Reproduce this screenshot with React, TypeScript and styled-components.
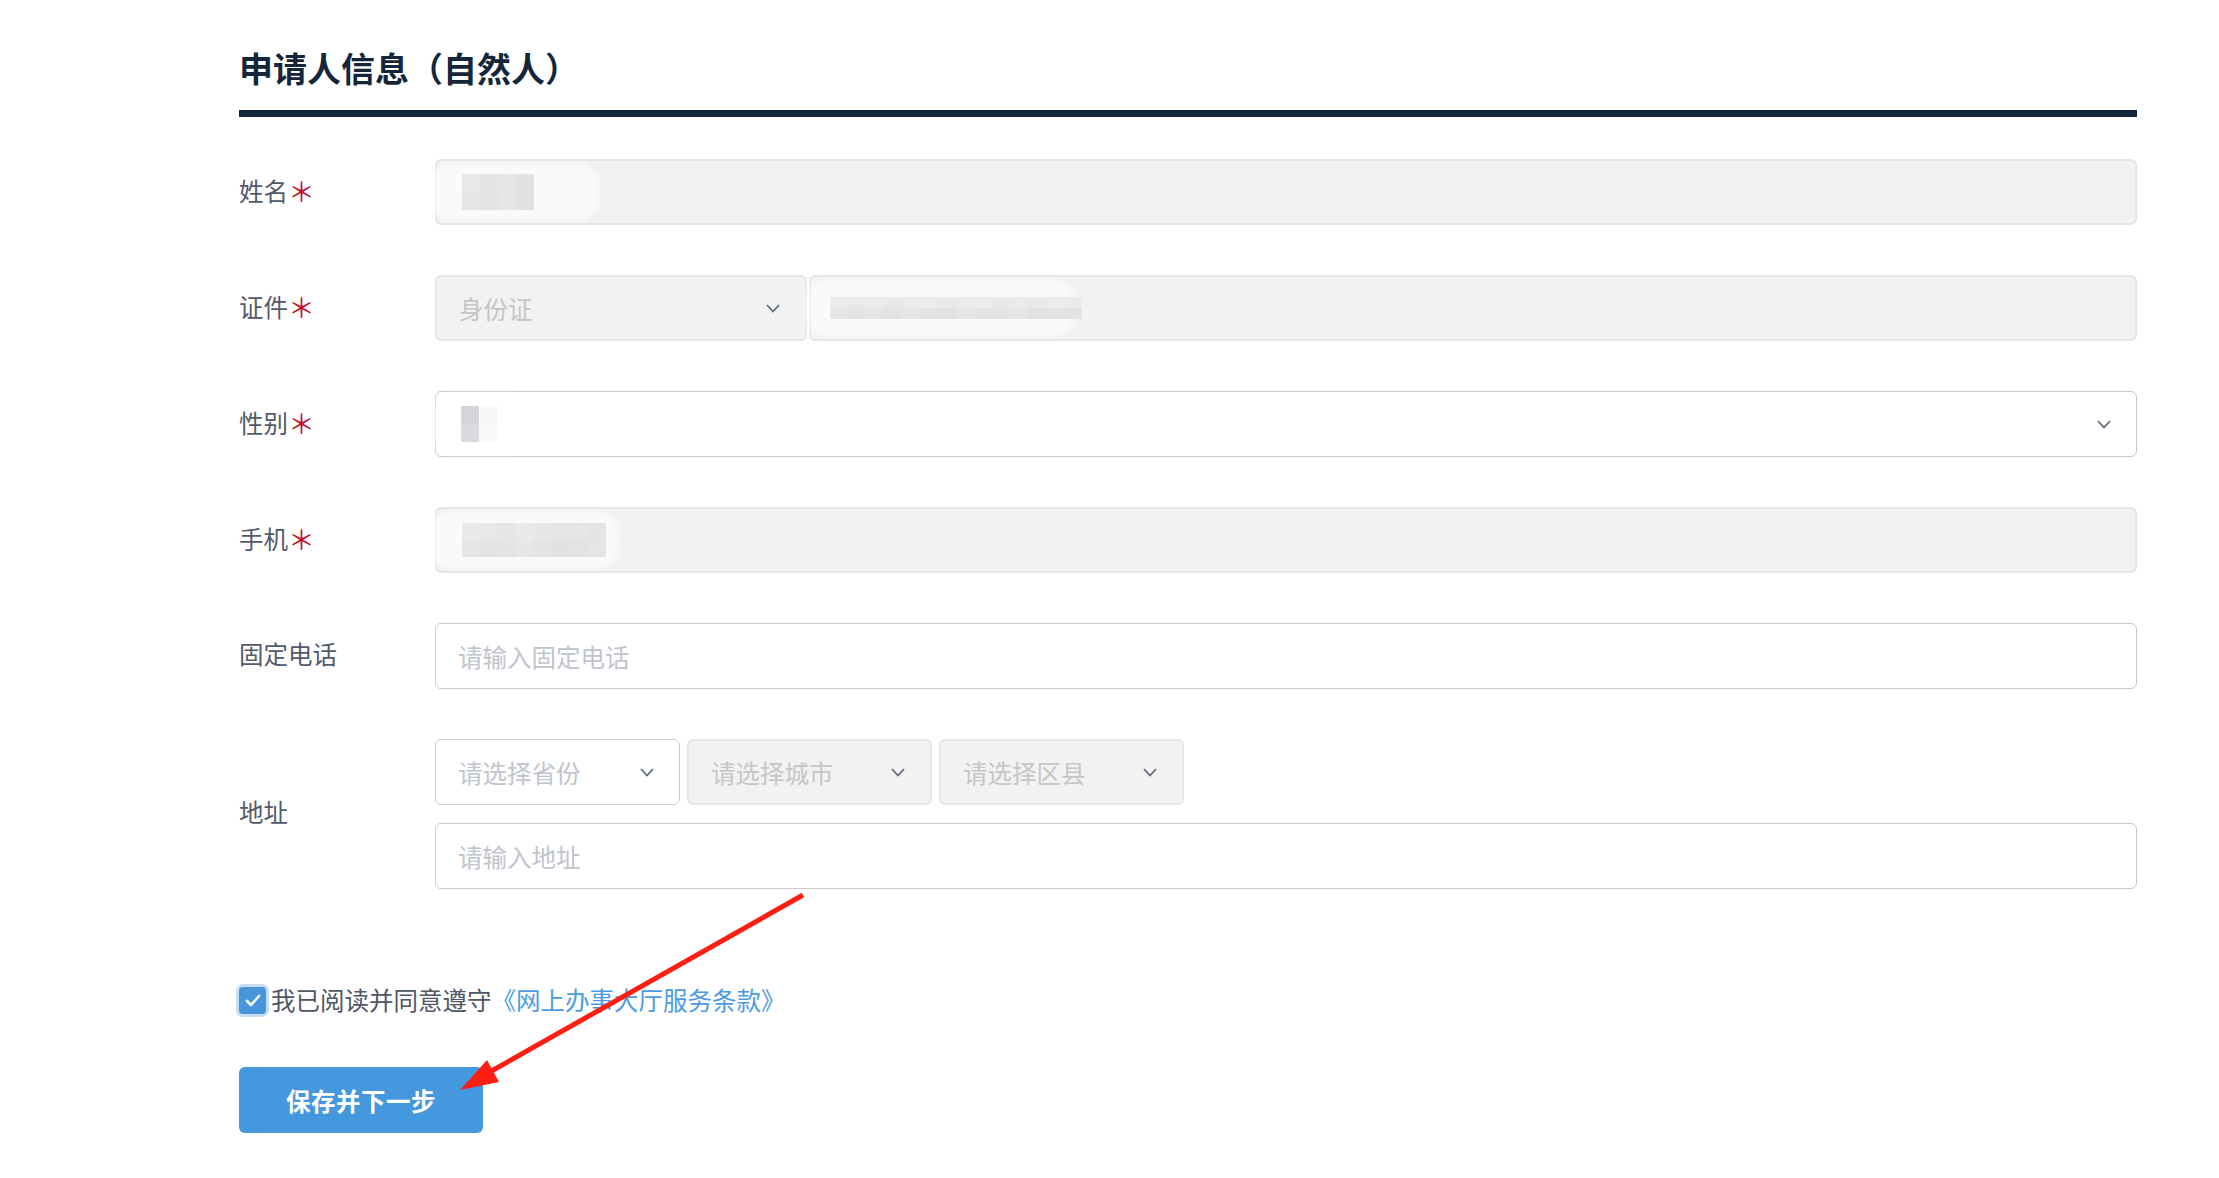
import React, { FC } from "react";
import styled, { createGlobalStyle } from "styled-components";

const GlobalStyle = createGlobalStyle`
    html, body {
        margin: 0;
        padding: 0;
        background: #fff;
    }
    body {
        font-family: "Noto Sans CJK SC", "Noto Sans", sans-serif;
    }
    * {
        box-sizing: border-box;
    }
`;

const Page = styled.div`
    position: relative;
    width: 2219px;
    height: 1178px;
    padding: 48px 0 0 239px;
    overflow: hidden;
`;

const Section = styled.section`
    width: 1898px;
`;

const Title = styled.h2`
    margin: 0;
    font-size: 34px;
    line-height: 40px;
    font-weight: 700;
    color: #15263a;
`;

const TitleRule = styled.div`
    height: 7px;
    margin-top: 22px;
    background: #14263a;
`;

const Form = styled.div`
    display: flex;
    flex-direction: column;
    gap: 50px;
    margin-top: 42px;
`;

const Row = styled.div`
    display: flex;
    align-items: center;
`;

const Label = styled.div`
    width: 196px;
    flex: none;
    font-size: 24.5px;
    line-height: 34px;
    color: #525a6a;
    transform: translateY(-2px);
`;

const Required = styled.span`
    display: inline-block;
    font-size: 27px;
    line-height: 34px;
    font-weight: 400;
    color: #c40f30;
    transform: translateY(1px);
`;

const Fields = styled.div`
    flex: 1;
    display: flex;
    flex-direction: column;
    gap: 18px;
`;

const FieldLine = styled.div<{ $gap: number }>`
    display: flex;
    gap: ${p => p.$gap}px;
`;

const Box = styled.div<{ $disabled?: boolean; $width?: number }>`
    position: relative;
    height: 66px;
    ${p => (p.$width ? `width: ${p.$width}px; flex: none;` : `flex: 1;`)}
    display: flex;
    align-items: center;
    padding: 0 25px 0 22px;
    border-radius: 6px;
    border: ${p => (p.$disabled ? "2px solid #e6e6e6" : "1.5px solid #cacaca")};
    background: ${p => (p.$disabled ? "#f2f2f2" : "#fff")};
    font-size: 24.5px;
    color: #c0c4cc;
`;

const Placeholder = styled.span<{ $disabled?: boolean }>`
    flex: 1;
    color: ${p => (p.$disabled ? "#c6c6c6" : "#c0c4cc")};
    white-space: nowrap;
`;

const Chevron = styled.svg`
    flex: none;
    width: 14px;
    height: 9px;
`;

const Halo = styled.div<{ $left: number; $width: number }>`
    position: absolute;
    top: 2px;
    bottom: 2px;
    left: ${p => p.$left}px;
    width: ${p => p.$width}px;
    border-radius: 22px;
    background: rgba(255, 255, 255, 0.6);
    filter: blur(2px);
`;

const MosaicGrid = styled.div<{ $cols: number; $cw: number; $ch: number; $offset: number }>`
    position: relative;
    display: grid;
    grid-template-columns: repeat(${p => p.$cols}, ${p => p.$cw}px);
    grid-auto-rows: ${p => p.$ch}px;
    margin-left: ${p => p.$offset}px;
`;

const Cell = styled.div<{ $shade: string }>`
    background: ${p => p.$shade};
`;

const Agreement = styled.label`
    display: flex;
    align-items: center;
    margin-top: 95px;
    font-size: 24.5px;
    line-height: 32px;
    color: #4f5666;
`;

const CheckBox = styled.span`
    display: inline-flex;
    align-items: center;
    justify-content: center;
    width: 27px;
    height: 27px;
    margin: 0 5px 0 0;
    border-radius: 4px;
    background: #4796dc;
    box-shadow: 0 0 0 3px #c7ddf4;
`;

const TermsLink = styled.a`
    color: #4b9be3;
    text-decoration: none;
`;

const PrimaryButton = styled.button`
    display: block;
    width: 244px;
    height: 66px;
    margin-top: 51px;
    border: none;
    border-radius: 6px;
    background: #4398de;
    color: #fff;
    font-family: inherit;
    font-size: 24.5px;
    font-weight: 700;
    letter-spacing: 0.5px;
`;

const ArrowLayer = styled.svg`
    position: absolute;
    left: 0;
    top: 0;
    width: 2219px;
    height: 1178px;
    pointer-events: none;
`;

const ChevronIcon: FC = () => (
    <Chevron viewBox="0 0 14 9">
        <polyline points="1,1 7,7.5 13,1" fill="none" stroke="#5f6b7c" strokeWidth="1.8" />
    </Chevron>
);

interface IMosaic {
    cols: number;
    cw: number;
    ch: number;
    offset?: number;
    shades: string[];
}

const Mosaic: FC<IMosaic> = ({ cols, cw, ch, offset = 5, shades }) => (
    <MosaicGrid $cols={cols} $cw={cw} $ch={ch} $offset={offset}>
        {shades.map((s, i) => (
            <Cell key={i} $shade={s} />
        ))}
    </MosaicGrid>
);

const nameShades = ["#e8e8e8", "#e4e4e4", "#e6e6e6", "#e2e2e2", "#e5e5e5", "#e3e3e3", "#e6e6e6", "#e1e1e1"];
const genderShades = ["#d4d5da", "#f6f7f9", "#dadbe0", "#f8f9fa"];
const phoneShades = [
    "#e9e9e9", "#e8e8e8", "#e6e6e6", "#e9e9e9", "#e7e7e7", "#e5e5e5", "#e6e6e6", "#e4e4e4",
    "#e6e6e6", "#e3e3e3", "#e4e4e4", "#e7e7e7", "#e4e4e4", "#e2e2e2", "#e3e3e3", "#e5e5e5",
];
const idShades = [
    "#ececec", "#eaeaea", "#ebebeb", "#e9e9e9", "#eaeaea", "#ebebeb", "#e9e9e9", "#eaeaea", "#ebebeb", "#e9e9e9", "#eaeaea", "#e9e9e9", "#ebebeb", "#eaeaea",
    "#e6e6e6", "#e4e4e4", "#e5e5e5", "#e3e3e3", "#e6e6e6", "#e4e4e4", "#e2e2e2", "#e5e5e5", "#e4e4e4", "#e3e3e3", "#e5e5e5", "#e2e2e2", "#e4e4e4", "#e3e3e3",
];

const Star: FC = () => <Required>＊</Required>;

export default function App() {
    return (
        <Page>
            <GlobalStyle />
            <Section>
                <Title>申请人信息（自然人）</Title>
                <TitleRule />
                <Form>
                    <Row>
                        <Label>姓名<Star /></Label>
                        <Box $disabled>
                            <Halo $left={-8} $width={170} />
                            <Mosaic cols={4} cw={18} ch={18} offset={3} shades={nameShades} />
                        </Box>
                    </Row>
                    <Row>
                        <Label>证件<Star /></Label>
                        <Fields>
                            <FieldLine $gap={2}>
                                <Box $disabled $width={372}>
                                    <Placeholder $disabled>身份证</Placeholder>
                                    <ChevronIcon />
                                </Box>
                                <Box $disabled>
                                    <Halo $left={-6} $width={270} />
                                    <Mosaic cols={14} cw={18} ch={11} offset={-3} shades={idShades} />
                                </Box>
                            </FieldLine>
                        </Fields>
                    </Row>
                    <Row>
                        <Label>性别<Star /></Label>
                        <Box>
                            <Halo $left={-6} $width={100} />
                            <Mosaic cols={2} cw={18} ch={18} offset={3} shades={genderShades} />
                            <Placeholder />
                            <ChevronIcon />
                        </Box>
                    </Row>
                    <Row>
                        <Label>手机<Star /></Label>
                        <Box $disabled>
                            <Halo $left={-8} $width={190} />
                            <Mosaic cols={8} cw={18} ch={17} offset={3} shades={phoneShades} />
                        </Box>
                    </Row>
                    <Row>
                        <Label>固定电话</Label>
                        <Box>
                            <Placeholder>请输入固定电话</Placeholder>
                        </Box>
                    </Row>
                    <Row>
                        <Label>地址</Label>
                        <Fields>
                            <FieldLine $gap={7}>
                                <Box $width={245}>
                                    <Placeholder>请选择省份</Placeholder>
                                    <ChevronIcon />
                                </Box>
                                <Box $disabled $width={245}>
                                    <Placeholder $disabled>请选择城市</Placeholder>
                                    <ChevronIcon />
                                </Box>
                                <Box $disabled $width={245}>
                                    <Placeholder $disabled>请选择区县</Placeholder>
                                    <ChevronIcon />
                                </Box>
                            </FieldLine>
                            <FieldLine $gap={0}>
                                <Box>
                                    <Placeholder>请输入地址</Placeholder>
                                </Box>
                            </FieldLine>
                        </Fields>
                    </Row>
                </Form>
                <Agreement>
                    <CheckBox>
                        <svg width="16" height="13" viewBox="0 0 16 13">
                            <polyline points="2,7 6,11 14,2" fill="none" stroke="#fff" strokeWidth="2.6" strokeLinecap="round" strokeLinejoin="round" />
                        </svg>
                    </CheckBox>
                    我已阅读并同意遵守<TermsLink>《网上办事大厅服务条款》</TermsLink>
                </Agreement>
                <PrimaryButton>保存并下一步</PrimaryButton>
            </Section>
            <ArrowLayer viewBox="0 0 2219 1178">
                <line x1="803" y1="895" x2="488" y2="1073" stroke="#ff1e12" strokeWidth="5" />
                <polygon points="460,1090 499,1082 487,1060" fill="#ff1e12" />
            </ArrowLayer>
        </Page>
    );
}
